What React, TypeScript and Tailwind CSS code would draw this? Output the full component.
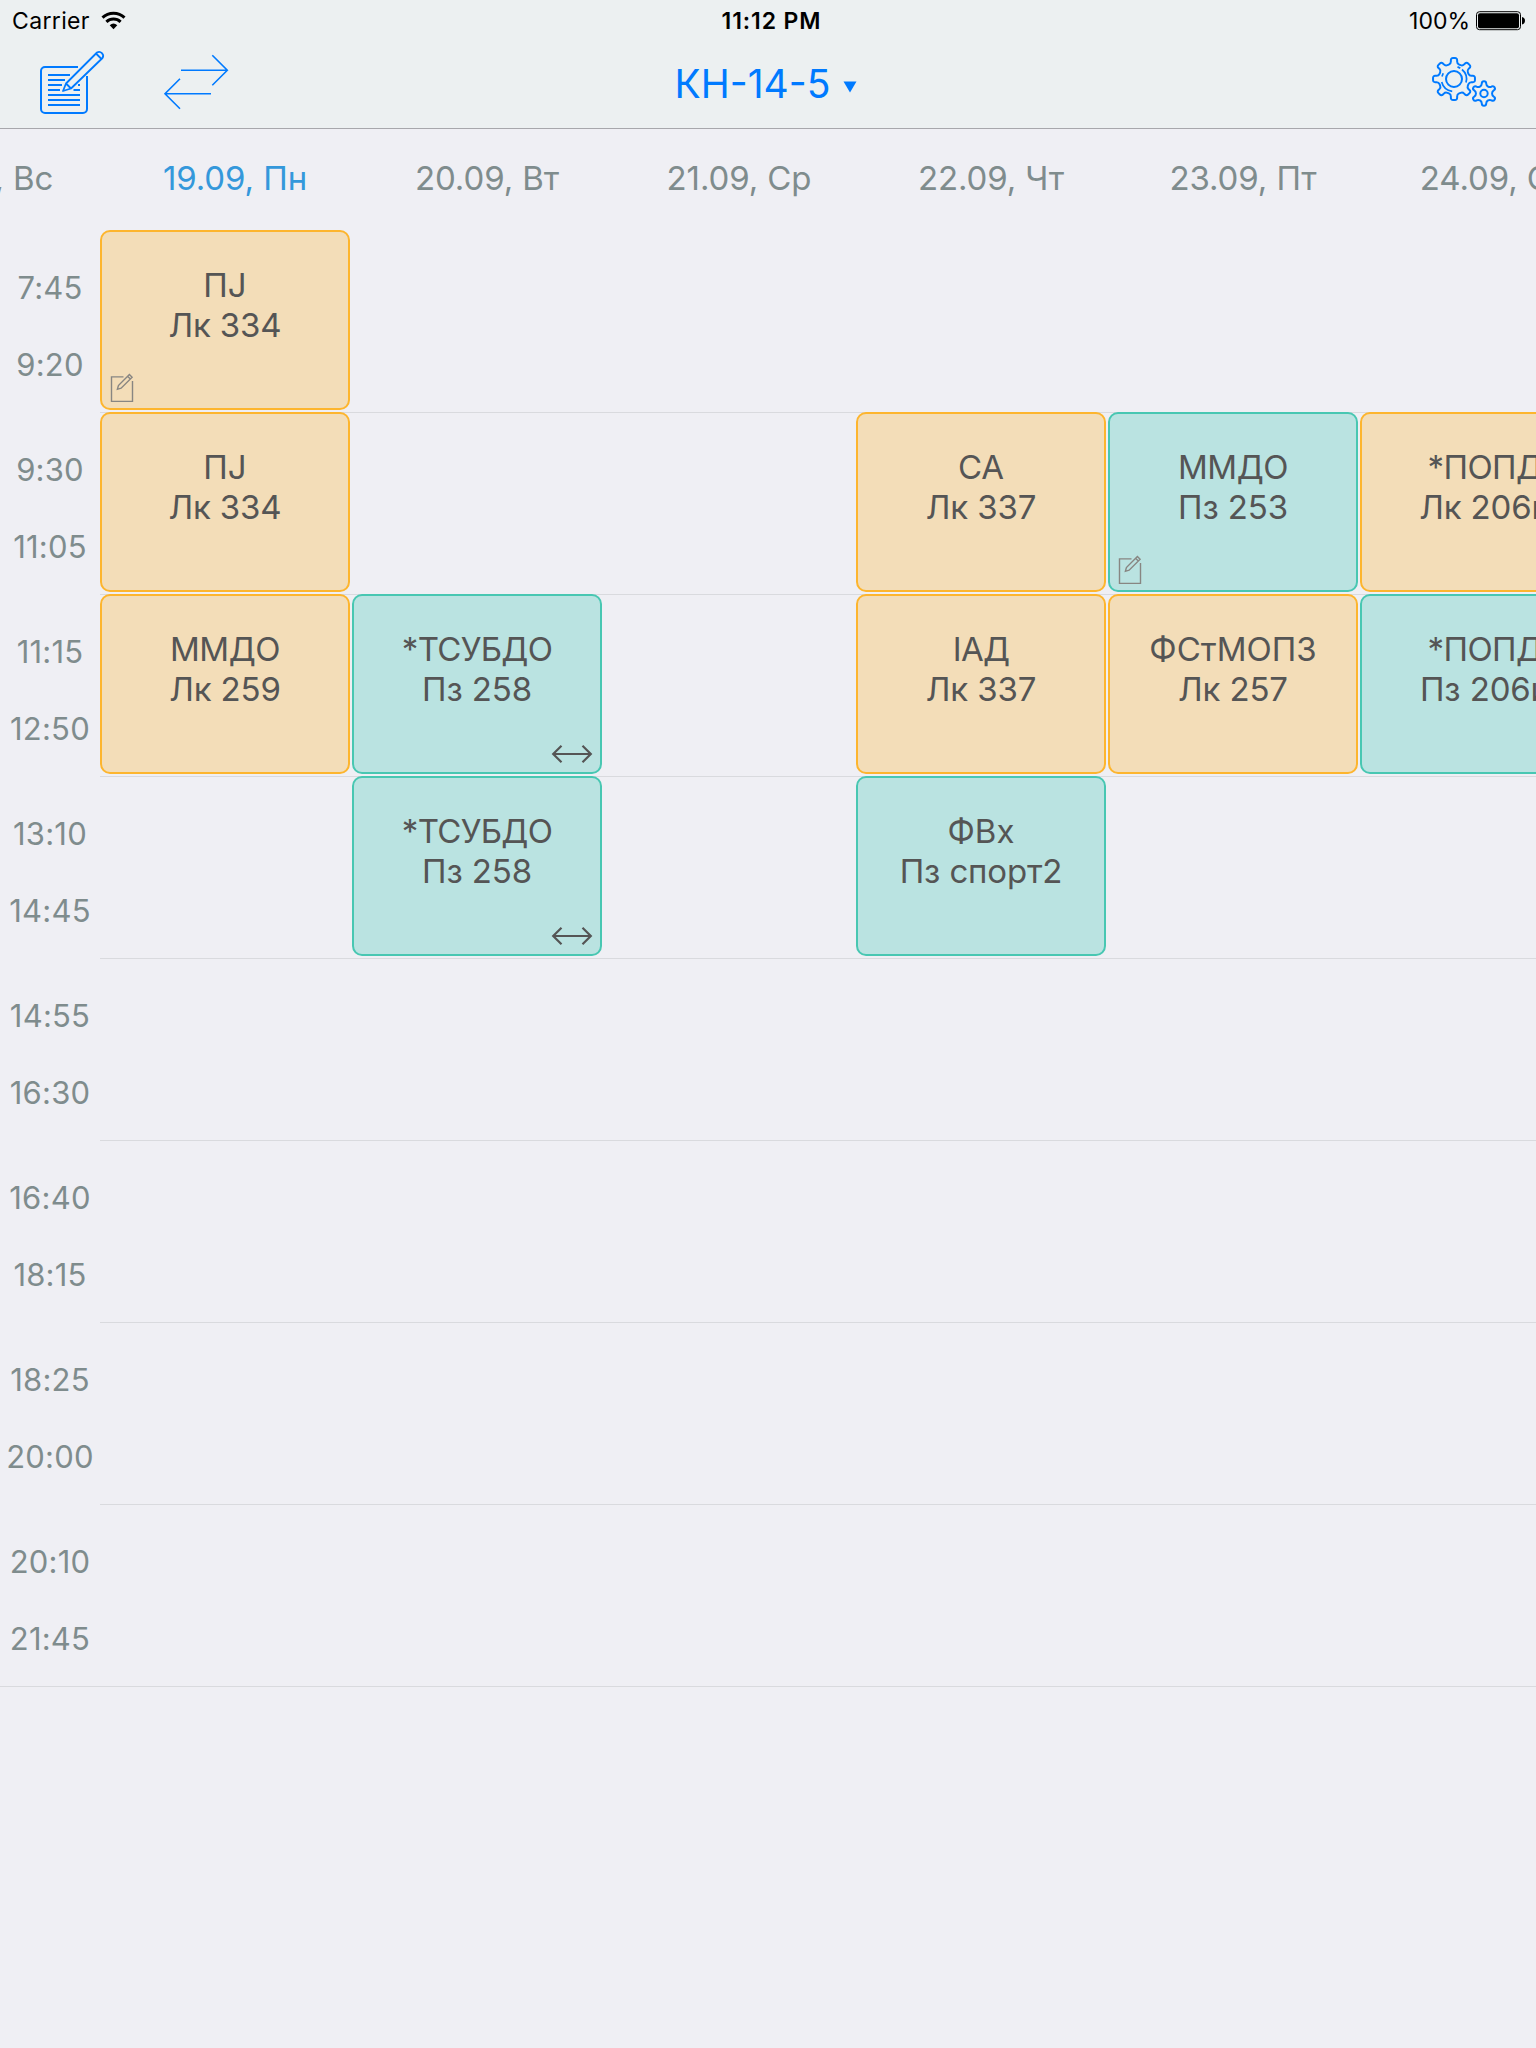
import React from "react";

const WORK_ICON_COLOR = "#555555";

type Lesson = {
  col: number;
  title: string;
  place: string;
  kind: "lecture" | "practice";
  icon?: "note" | "swap";
  titleClass?: string;
};

const days = [
  "18.09, Вс",
  "19.09, Пн",
  "20.09, Вт",
  "21.09, Ср",
  "22.09, Чт",
  "23.09, Пт",
  "24.09, Сб",
];

const rows: { start: string; end: string; lessons: Lesson[] }[] = [
  {
    start: "7:45",
    end: "9:20",
    lessons: [{ col: 0, title: "ПJ", place: "Лк 334", kind: "lecture", icon: "note" }],
  },
  {
    start: "9:30",
    end: "11:05",
    lessons: [
      { col: 0, title: "ПJ", place: "Лк 334", kind: "lecture" },
      { col: 3, title: "СА", place: "Лк 337", kind: "lecture" },
      { col: 4, title: "ММДО", place: "Пз 253", kind: "practice", icon: "note", titleClass: "tracking-[-0.5px]" },
      { col: 5, title: "*ПОПД", place: "Лк 206и", kind: "lecture", titleClass: "tracking-[-0.6px]" },
    ],
  },
  {
    start: "11:15",
    end: "12:50",
    lessons: [
      { col: 0, title: "ММДО", place: "Лк 259", kind: "lecture", titleClass: "tracking-[-0.5px]" },
      { col: 1, title: "*ТСУБДО", place: "Пз 258", kind: "practice", icon: "swap", titleClass: "tracking-[-0.7px]" },
      { col: 3, title: "ІАД", place: "Лк 337", kind: "lecture", titleClass: "tracking-[-0.8px]" },
      { col: 4, title: "ФСтМОПЗ", place: "Лк 257", kind: "lecture" },
      { col: 5, title: "*ПОПД", place: "Пз 206и", kind: "practice", titleClass: "tracking-[-0.6px]" },
    ],
  },
  {
    start: "13:10",
    end: "14:45",
    lessons: [
      { col: 1, title: "*ТСУБДО", place: "Пз 258", kind: "practice", icon: "swap", titleClass: "tracking-[-0.7px]" },
      { col: 3, title: "ФВх", place: "Пз спорт2", kind: "practice" },
    ],
  },
  { start: "14:55", end: "16:30", lessons: [] },
  { start: "16:40", end: "18:15", lessons: [] },
  { start: "18:25", end: "20:00", lessons: [] },
  { start: "20:10", end: "21:45", lessons: [] },
];

/** Closed, softly rounded outline of a gear with `teeth` teeth around (cx, cy). */
function gearPath(
  cx: number,
  cy: number,
  teeth: number,
  outer: number,
  inner: number,
  tip: number,
  root: number,
  radius: number,
) {
  const pts: [number, number][] = [];
  for (let i = 0; i < teeth; i++) {
    const mid = -Math.PI / 2 + (i * 2 * Math.PI) / teeth;
    const ring: [number, number][] = [
      [inner, -root],
      [outer, -tip],
      [outer, tip],
      [inner, root],
    ];
    for (const [r, a] of ring) {
      pts.push([cx + r * Math.cos(mid + a), cy + r * Math.sin(mid + a)]);
    }
  }
  const toward = (a: [number, number], b: [number, number]) => {
    const d = Math.hypot(b[0] - a[0], b[1] - a[1]);
    const t = Math.min(radius / d, 0.5);
    return `${(a[0] + (b[0] - a[0]) * t).toFixed(2)} ${(a[1] + (b[1] - a[1]) * t).toFixed(2)}`;
  };
  return (
    pts
      .map((p, i) => {
        const prev = pts[(i + pts.length - 1) % pts.length];
        const next = pts[(i + 1) % pts.length];
        return `${i === 0 ? "M" : "L"}${toward(p, prev)} Q${p[0].toFixed(2)} ${p[1].toFixed(2)} ${toward(p, next)}`;
      })
      .join(" ") + " Z"
  );
}

function ComposeIcon() {
  return (
    <svg width="68" height="68" viewBox="38 48 68 68" fill="none" stroke="#007aff" strokeWidth="2">
      <path d="M78 67H45a4 4 0 0 0-4 4v38a4 4 0 0 0 4 4h38a4 4 0 0 0 4-4V76" />
      <path d="M48 75h22M48 80h17M48 85h14M78 85h2M48 90h12M73.500 90h6.500M48 95h32M48 100h32M48 105h32" />
      <path d="M66 83.500 97 52.500a4 4 0 0 1 5.500 5.500L71 88.500 63 91ZM66 83.500l5 5M96 53.500l5.500 5.500" strokeWidth="1.800" strokeLinejoin="round" />
    </svg>
  );
}

function TransferIcon() {
  return (
    <svg width="66" height="58" viewBox="163 53 66 58" fill="none" stroke="#007aff" strokeWidth="1.600">
      <path d="M181 70.300h46M212.300 55.300l15 15-15 15M211 93.700h-46M180 78.700l-15 15 15 15" />
    </svg>
  );
}

function GearsIcon() {
  return (
    <svg width="68" height="54" viewBox="1430 55 68 54" fill="none" stroke="#007aff" strokeWidth="2" strokeLinejoin="round">
      <path d={gearPath(1454, 79, 8, 21.2, 15.6, 0.15, 0.2, 2.2)} />
      <circle cx="1454" cy="79" r="8" />
      <path d="M1441.700 82a12.600 12.600 0 0 0 10.500 9.300M1442 76.500l1.200-3.200M1457.500 66.900l2.800 1.200M1462 69.500a12.600 12.600 0 0 1 4 13" strokeWidth="1.700" />
      <path d={gearPath(1484, 93.5, 6, 12.4, 8.3, 0.17, 0.28, 2)} />
      <circle cx="1484" cy="93.500" r="3.700" />
    </svg>
  );
}

function WifiIcon() {
  return (
    <svg width="26" height="20" viewBox="0 0 26 20" fill="none" stroke="#000" strokeWidth="3">
      <path d="M1.500 6.600a16 16 0 0 1 22 0M5.400 10.800a10.300 10.300 0 0 1 14.200 0" />
      <path d="M8.700 14.200a5.900 5.900 0 0 1 7.600 0L12.500 18.300Z" fill="#000" stroke="none" />
    </svg>
  );
}

function BatteryIcon() {
  return (
    <svg width="50" height="20" viewBox="0 0 50 20">
      <rect x="0.500" y="0.700" width="44" height="18" rx="3" fill="none" stroke="#000" />
      <rect x="2" y="2.200" width="41" height="15" rx="2" fill="#000" />
      <path d="M46 6c1.800.3 3 1.800 3 3.700s-1.200 3.400-3 3.700Z" fill="#000" />
    </svg>
  );
}

function NoteIcon() {
  return (
    <svg className="absolute bottom-[5px] left-[8px]" width="26" height="30" viewBox="110 373 26 30" fill="none" stroke="#888682" strokeWidth="1.400">
      <path d="M123.500 376.900h-12v24.500h21v-20.400" />
      <path d="M117.400 389.300l1-3.800 11-11 2.700 2.700-11 11ZM127.600 376.300l2.700 2.700" />
    </svg>
  );
}

function SwapIcon() {
  return (
    <svg className="absolute right-[6px] bottom-[8px]" width="44" height="20" viewBox="0 0 44 20" fill="none" stroke={WORK_ICON_COLOR} strokeWidth="2.200">
      <path d="M3 10h38M11.500 1.700 3.200 10l8.300 8.300M32.500 1.700l8.300 8.300-8.300 8.300" />
    </svg>
  );
}

function LessonCard({ lesson }: { lesson: Lesson }) {
  const tone =
    lesson.kind === "lecture"
      ? "border-[#fdb52e] bg-[#f3ddb8]"
      : "border-[#48c7b2] bg-[#bae3e1]";
  return (
    <div
      className={`relative mr-[2px] h-[180px] w-[250px] shrink-0 rounded-[10px] border-2 pt-[33px] text-center text-[33px] leading-[40px] whitespace-nowrap text-[#555555] ${tone}`}
    >
      <div className={lesson.titleClass}>{lesson.title}</div>
      <div className="tracking-[-0.15px]">{lesson.place}</div>
      {lesson.icon === "note" && <NoteIcon />}
      {lesson.icon === "swap" && <SwapIcon />}
    </div>
  );
}

export default function App() {
  return (
    <div className="flex h-[2048px] w-[1536px] flex-col overflow-hidden bg-[#efeff4] font-['Inter',sans-serif]">
      <header className="h-[129px] shrink-0 border-b border-[#a7a7ac] bg-[#ecf0f1]">
        <div className="grid h-[40px] grid-cols-3 items-center pt-[2px] text-[23px] text-black">
          <div className="flex items-center gap-[11px] pl-[12px]">
            <span className="tracking-[0.35px]">Carrier</span>
            <WifiIcon />
          </div>
          <div className="pl-[7px] text-center font-semibold tracking-[0.9px]">11:12 PM</div>
          <div className="flex items-center justify-end gap-[6px] pr-[10px]">
            <span>100%</span>
            <BatteryIcon />
          </div>
        </div>
        <div className="grid h-[88px] grid-cols-3 items-center">
          <div className="flex items-center gap-[57px] pb-[4px] pl-[38px]">
            <ComposeIcon />
            <TransferIcon />
          </div>
          <div className="flex items-center justify-center gap-[13px] pr-[4px] text-[39px] text-[#007aff]">
            <span>КН-14-5</span>
            <svg className="mt-[5px]" width="14" height="12" viewBox="0 0 14 12" fill="#007aff">
              <path d="M0.500 0.500h13L7 11.500Z" />
            </svg>
          </div>
          <div className="flex justify-end pr-[38px] pb-[4px]">
            <GearsIcon />
          </div>
        </div>
      </header>

      <div className="-ml-[143px] flex h-[101px] shrink-0 text-[33px] leading-[40px] tracking-[-0.1px] text-[#7f8c8d]">
        {days.map((day, i) => (
          <div
            key={day}
            className={`w-[252px] shrink-0 pt-[29px] text-center whitespace-nowrap ${i === 1 ? "text-[#3498db]" : ""}`}
          >
            {day}
          </div>
        ))}
      </div>

      <main className="border-b border-[#d9dade]">
        {rows.map((row, i) => (
          <section key={row.start} className="flex h-[182px]">
            <div className="flex w-[100px] shrink-0 flex-col items-center gap-[37px] pt-[38px] text-[31px] leading-[40px] tracking-[0.2px] text-[#7f8c8d]">
              <span>{row.start}</span>
              <span>{row.end}</span>
            </div>
            <div
              className={`grid flex-1 grid-cols-[repeat(6,252px)] overflow-hidden ${i > 0 ? "shadow-[inset_0_1px_0_#d9dade]" : ""}`}
            >
              {Array.from({ length: 6 }, (_, col) => {
                const lesson = row.lessons.find((l) => l.col === col);
                return <div key={col}>{lesson && <LessonCard lesson={lesson} />}</div>;
              })}
            </div>
          </section>
        ))}
      </main>
    </div>
  );
}
